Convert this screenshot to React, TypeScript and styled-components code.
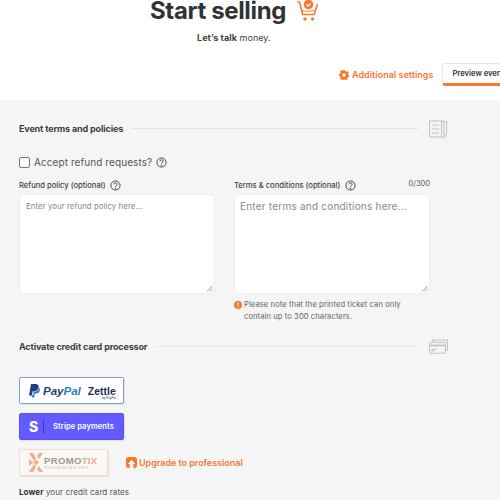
import React from "react";
import styled, { createGlobalStyle } from "styled-components";

const Global = createGlobalStyle`
  html, body { margin: 0; padding: 0; background: #fff; }
  body { font-family: Inter, "Noto Sans", "Liberation Sans", sans-serif; color: #414042; }
  #root { width: 500px; height: 500px; overflow: hidden; }
  * { box-sizing: border-box; }
`;

const Page = styled.div`
  width: 500px;
  height: 500px;
  overflow: hidden;
  display: flex;
  flex-direction: column;
`;
const Header = styled.header`
  height: 100px;
  flex: none;
  display: flex;
  flex-direction: column;
  background: #fff;
`;
const TitleRow = styled.div`
  height: 22px;
  padding-left: 150px;
  display: flex;
  align-items: center;
  gap: 10px;
`;
const Title = styled.h1`
  margin: 0;
  font-size: 24px;
  line-height: 22px;
  font-weight: 700;
  letter-spacing: -0.35px;
  color: #303335;
  white-space: nowrap;
`;
const Sub = styled.p`
  margin: 10px 0 0 197px;
  font-size: 9px;
  line-height: 12px;
  letter-spacing: 0.05px;
  color: #414042;
  white-space: nowrap;
  b { font-weight: 700; }
`;
const HeaderActions = styled.div`
  margin-top: 19px;
  padding-left: 339px;
  display: flex;
  align-items: center;
  gap: 9px;
  white-space: nowrap;
`;
const SettingsLink = styled.a`
  display: flex;
  align-items: center;
  gap: 3px;
  width: 95px;
  color: #f47b30;
  font-size: 9px;
  font-weight: 600;
  letter-spacing: 0.02px;
  svg { flex: none; }
`;
const Preview = styled.button`
  flex: none;
  width: 90px;
  height: 23px;
  padding: 0 0 0 9px;
  text-align: left;
  background: #fff;
  border: 1px solid #f0e6df;
  border-bottom: 3px solid #f47b30;
  border-radius: 3px;
  font: 600 7.6px Inter, sans-serif;
  color: #333;
  overflow: hidden;
`;
const Main = styled.main`
  flex: 1;
  background: #f5f5f5;
  padding: 20px 0 0 19px;
`;
const SectionHead = styled.div`
  width: 429px;
  height: 17px;
  display: flex;
  align-items: center;
`;
const SectionTitle = styled.h2`
  margin: 0;
  font-size: 9px;
  font-weight: 700;
  letter-spacing: -0.15px;
  color: #3f4042;
  white-space: nowrap;
`;
const Rule = styled.span`
  flex: 1;
  height: 1px;
  margin: 0 10px 0 9px;
  background: #e5e5e5;
`;
const AcceptRow = styled.label`
  display: flex;
  align-items: center;
  margin-top: 18px;
  height: 14px;
  font-size: 10px;
  letter-spacing: 0.08px;
  color: #555;
  gap: 4px;
`;
const Checkbox = styled.span`
  width: 11px;
  height: 11px;
  background: #fff;
  border: 1px solid #777;
  border-radius: 2px;
`;
const Columns = styled.div`
  display: grid;
  grid-template-columns: 196px 196px;
  gap: 19px;
  margin-top: 8px;
  width: 411px;
`;
const Field = styled.div`
  display: flex;
  flex-direction: column;
`;
const LabelRow = styled.div`
  height: 16px;
  display: flex;
  align-items: center;
  gap: 5px;
`;
const Label = styled.span`
  font-size: 7.6px;
  font-weight: 500;
  color: #444;
  white-space: nowrap;
`;
const Counter = styled.span`
  margin-left: auto;
  position: relative;
  top: -2px;
  font-size: 7.5px;
  color: #555;
`;
const Area = styled.div<{ $big?: boolean }>`
  position: relative;
  height: 100px;
  margin-top: 1px;
  padding: ${(p) => (p.$big ? "3px 5px" : "5px 6px")};
  background: #fff;
  border: 1px solid #eee;
  border-radius: 5px;
  color: #888;
  font-size: ${(p) => (p.$big ? "10px" : "7.8px")};
  letter-spacing: ${(p) => (p.$big ? "0.22px" : "0.08px")};
  line-height: ${(p) => (p.$big ? "16px" : "12px")};
  white-space: nowrap;
`;
const Grip = styled.svg`
  position: absolute;
  right: 1px;
  bottom: 1px;
`;
const Note = styled.div`
  display: flex;
  gap: 2px;
  margin-top: 5px;
  font-size: 7.6px;
  line-height: 12px;
  letter-spacing: 0.08px;
  color: #666;
`;
const Section2 = styled(SectionHead)`
  margin-top: 15px;
`;
const PayBtn = styled.div<{ $bg: string; $bd: string; $w: number }>`
  width: ${(p) => p.$w}px;
  height: 27px;
  display: flex;
  align-items: center;
  background: ${(p) => p.$bg};
  border: 1px solid ${(p) => p.$bd};
  border-radius: 2px;
  box-shadow: 1px 1px 1px rgba(0, 0, 0, 0.08);
`;
const Processors = styled.div`
  margin-top: 22px;
  display: flex;
  flex-direction: column;
  gap: 9px;
`;
const PayPalWord = styled.span`
  margin-left: 3px;
  font: italic 700 11.5px "Liberation Sans", sans-serif;
  color: #253b80;
  span { color: #1f7fc4; }
`;
const Zettle = styled.span`
  position: relative;
  margin-left: 7px;
  font: 700 10.5px "Liberation Sans", sans-serif;
  color: #1f2a5a;
  small {
    position: absolute;
    right: 0;
    top: 11px;
    font-size: 3px;
    font-weight: 400;
  }
`;
const StripeS = styled.span`
  width: 14px;
  margin-left: 9px;
  color: #fff;
  font: 800 14px Inter, sans-serif;
`;
const StripeBar = styled.span`
  width: 1px;
  height: 14px;
  background: #4338b8;
`;
const StripeText = styled.span`
  margin-left: 9px;
  color: #fff;
  font-size: 7.5px;
  font-weight: 600;
  letter-spacing: 0.1px;
  white-space: nowrap;
`;
const ProRow = styled.div`
  display: flex;
  align-items: center;
  gap: 18px;
`;
const PromoMark = styled.svg`
  margin-left: 9px;
  flex: none;
`;
const PromoText = styled.div`
  margin-left: 1px;
  display: flex;
  flex-direction: column;
  line-height: 1;
`;
const PromoName = styled.span`
  font: 700 9.5px "Liberation Sans", sans-serif;
  letter-spacing: 0.35px;
  color: #9a9a9a;
  span { color: #eea98a; }
`;
const PromoSub = styled.span`
  font: 400 3.5px "Liberation Sans", sans-serif;
  letter-spacing: 0.95px;
  color: #b5b5b5;
  white-space: nowrap;
`;
const Upgrade = styled.a`
  display: flex;
  align-items: center;
  gap: 2px;
  color: #f47b30;
  font-size: 9px;
  font-weight: 600;
  letter-spacing: -0.03px;
  white-space: nowrap;
`;
const Lower = styled.p`
  margin: 11px 0 0;
  font-size: 8px;
  line-height: 10px;
  letter-spacing: 0.1px;
  color: #555;
  b { color: #333; }
`;

const Help = () => (
  <svg width="11" height="11" viewBox="0 0 12 12" fill="none" stroke="#3a3a3a" strokeWidth="1">
    <circle cx="6" cy="6" r="5" />
    <path d="M4.4 4.7a1.7 1.7 0 1 1 2.4 1.5c-.6.3-.8.6-.8 1.1" />
    <circle cx="6" cy="9" r=".4" fill="#3a3a3a" />
  </svg>
);

const Cart = () => (
  <svg width="24" height="24" viewBox="0 0 24 24" fill="none" stroke="#f47b30" strokeWidth="1.6">
    <path d="M1 3h2.500l3.200 12.500h11.500L21.500 5" strokeLinejoin="round" />
    <path d="M6 11.500c3 1 8 1 12.500-.2" strokeWidth="1" />
    <circle cx="12.500" cy="5.500" r="4.800" fill="#f47b30" stroke="none" />
    <path d="M10.400 5.500l1.600 1.600 2.800-2.800" stroke="#fff" strokeWidth="1.100" />
    <circle cx="9" cy="20" r="1.700" fill="#f47b30" stroke="none" />
    <circle cx="16.500" cy="20" r="1.700" fill="#f47b30" stroke="none" />
  </svg>
);

const Gear = () => (
  <svg width="10" height="10" viewBox="0 0 10 10">
    <path
      fill="#f47b30"
      fillRule="evenodd"
      d="M4 0h2l.3 1.300 1.100.5L8.600 1 10 2.600l-.9 1 .1.800 .8.600v2l-1.200.2-.5 1.100.6 1.100L7.400 10l-1-.8-1.400.8h-1l-.4-.9-1 .8L1 8.600l.6-1.100-.5-1.100L0 6V4l1.200-.4.4-1L1 1.400 2.600 0l1 .9L4 0zM5 3.300a1.700 1.700 0 1 0 0 3.400 1.700 1.700 0 0 0 0-3.400z"
    />
  </svg>
);

const DocIcon = () => (
  <svg width="19" height="18" viewBox="0 0 19 18" fill="none" stroke="#c4c4c4" strokeWidth="1.100">
    <rect x=".6" y="1" width="12" height="16" />
    <path d="M3 5h7M3 9h7M3 13h7" />
    <path d="M15 1.500h2.600V14l-1.300 2L15 14z" />
    <path d="M13 1h2M13 17h4" />
  </svg>
);

const CardsIcon = () => (
  <svg width="19" height="15" viewBox="0 0 19 15" fill="none" stroke="#c4c4c4" strokeWidth="1.100">
    <path d="M3.500 3V1h15v10h-2" />
    <rect x=".6" y="3.200" width="15.800" height="11" rx="1.200" />
    <path d="M.6 6.500h15.800" strokeWidth="1.800" />
    <path d="M2.500 10.500h5M2.500 12h3" />
  </svg>
);

const Warn = () => (
  <svg width="8" height="8" viewBox="0 0 8 8" style={{ flex: "none", marginTop: 2 }}>
    <circle cx="4" cy="4" r="4" fill="#f47b30" />
    <path d="M4 1.600v3M4 5.600v.9" stroke="#fff" strokeWidth="1" />
  </svg>
);

const ResizeGrip = () => (
  <Grip width="7" height="7" viewBox="0 0 7 7" stroke="#777" strokeWidth=".8">
    <path d="M1 6.500L6.500 1M4 6.500L6.500 4" />
  </Grip>
);

const PayPalMark = () => (
  <svg width="11" height="14" viewBox="0 0 11 14" style={{ marginLeft: 9, flex: "none" }}>
    <path fill="#253b80" d="M2 0h4.500C9 0 10 1.500 9.600 3.500 9.100 6 7.500 7.200 5 7.200H3.700L3 11.500H0z" />
    <path fill="#1f7fc4" d="M9.900 3.500c1 .7 1.200 1.800.9 3-.4 2-1.900 3-3.800 3H5.800l-.6 4H2.700l.4-2.200h1.100l.6-3.700h1.400c2 0 3.500-1.400 3.700-4.100z" />
  </svg>
);

const PromoLogo = () => (
  <PromoMark width="14" height="19" viewBox="0 0 14 19" fill="#eeaf90">
    <path d="M0 0h4l3 5-2 3zM14 0h-4L8 3l2 3zM0 19h4l3-5-2-3zM14 19h-4l-2-3 2-3z" />
    <path d="M0 6l4 3.500-4 3.500zM7 6.500l3 3-3 3-3-3z" />
  </PromoMark>
);

const UpgradeIcon = () => (
  <svg width="11" height="11" viewBox="0 0 12 12" style={{ flex: "none" }}>
    <path fill="#f47b30" d="M3 0h6a3 3 0 0 1 3 3v6a3 3 0 0 1-3 3H8V7.500h2L6 3 2 7.500h2V12H3a3 3 0 0 1-3-3V3a3 3 0 0 1 3-3z" />
  </svg>
);

export default function App() {
  return (
    <Page>
      <Global />
      <Header>
        <TitleRow>
          <Title>Start selling</Title>
          <Cart />
        </TitleRow>
        <Sub>
          <b>Let’s talk</b> money.
        </Sub>
        <HeaderActions>
          <SettingsLink>
            <Gear />
            Additional settings
          </SettingsLink>
          <Preview>Preview event</Preview>
        </HeaderActions>
      </Header>
      <Main>
        <SectionHead>
          <SectionTitle>Event terms and policies</SectionTitle>
          <Rule />
          <DocIcon />
        </SectionHead>
        <AcceptRow>
          <Checkbox />
          Accept refund requests?
          <Help />
        </AcceptRow>
        <Columns>
          <Field>
            <LabelRow>
              <Label>Refund policy (optional)</Label>
              <Help />
            </LabelRow>
            <Area>
              Enter your refund policy here...
              <ResizeGrip />
            </Area>
          </Field>
          <Field>
            <LabelRow>
              <Label>Terms &amp; conditions (optional)</Label>
              <Help />
              <Counter>0/300</Counter>
            </LabelRow>
            <Area $big>
              Enter terms and conditions here...
              <ResizeGrip />
            </Area>
            <Note>
              <Warn />
              <span>
                Please note that the printed ticket can only
                <br />
                contain up to 300 characters.
              </span>
            </Note>
          </Field>
        </Columns>
        <Section2>
          <SectionTitle>Activate credit card processor</SectionTitle>
          <Rule />
          <CardsIcon />
        </Section2>
        <Processors>
          <PayBtn $bg="#fff" $bd="#8a9cc5" $w={105}>
            <PayPalMark />
            <PayPalWord>
              Pay<span>Pal</span>
            </PayPalWord>
            <Zettle>
              Zettle
              <small>by PayPal</small>
            </Zettle>
          </PayBtn>
          <PayBtn $bg="#635bff" $bd="#5a52ee" $w={105}>
            <StripeS>S</StripeS>
            <StripeBar />
            <StripeText>Stripe payments</StripeText>
          </PayBtn>
          <ProRow>
            <PayBtn $bg="#fbf7f4" $bd="#f6dccb" $w={89}>
              <PromoLogo />
              <PromoText>
                <PromoName>
                  PROMO<span>TIX</span>
                </PromoName>
                <PromoSub>PROCESSING PRO</PromoSub>
              </PromoText>
            </PayBtn>
            <Upgrade>
              <UpgradeIcon />
              Upgrade to professional
            </Upgrade>
          </ProRow>
        </Processors>
        <Lower>
          <b>Lower</b> your credit card rates
        </Lower>
      </Main>
    </Page>
  );
}
